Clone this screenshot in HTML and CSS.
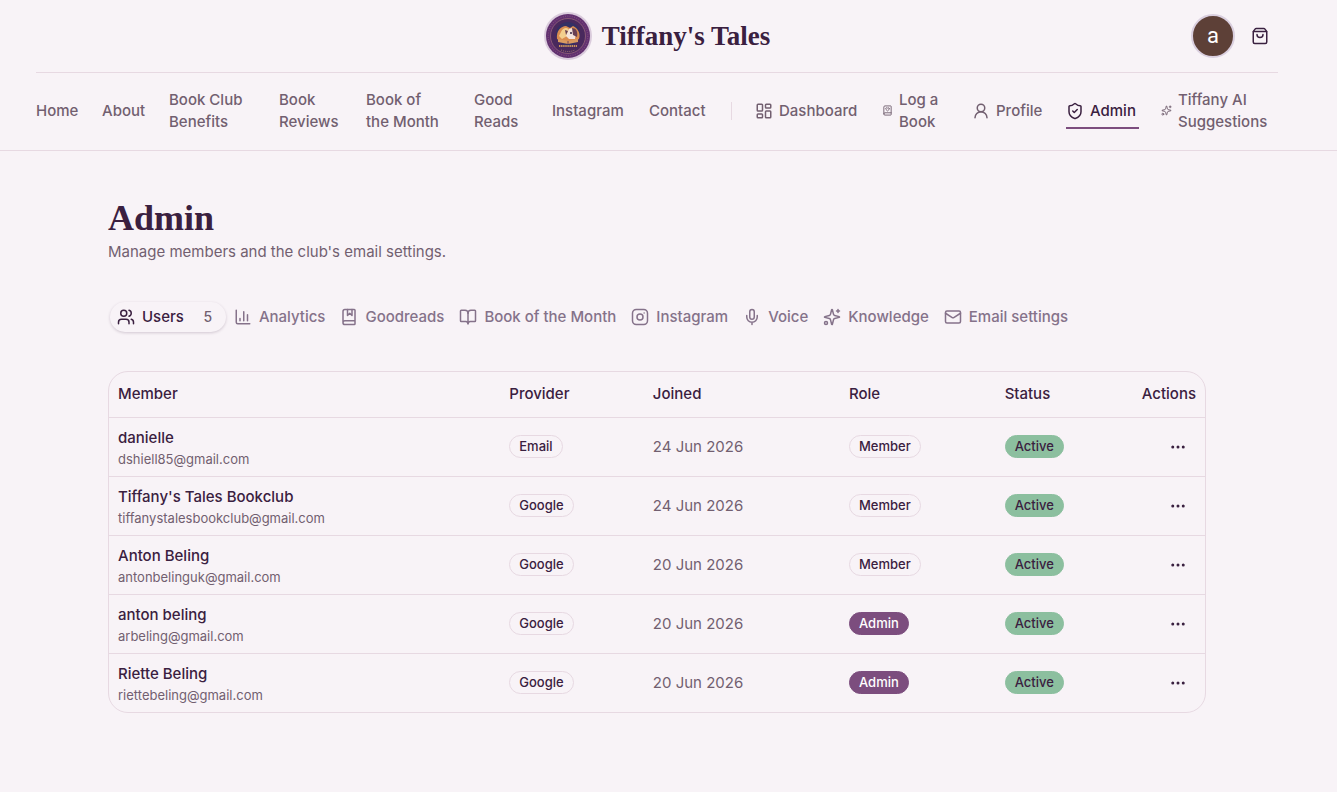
FILE: index.html
```html
<!DOCTYPE html>
<html lang="en">
<head>
  <meta charset="UTF-8">
  <meta name="viewport" content="width=device-width, initial-scale=1">
  <title>Admin - Tiffany's Tales</title>
  <link rel="stylesheet" href="styles.css">
</head>
<body>
  <!-- Shared icons -->
  <svg class="sprite" aria-hidden="true">
    <symbol id="dashboard" viewBox="0 0 24 24"><rect x="3" y="3" width="7" height="9" rx="1"/><rect x="14" y="3" width="7" height="5" rx="1"/><rect x="14" y="12" width="7" height="9" rx="1"/><rect x="3" y="16" width="7" height="5" rx="1"/></symbol>
    <symbol id="book-heart" viewBox="0 0 24 24"><path d="M16 8.2A2.22 2.22 0 0 0 13.8 6c-.8 0-1.4.3-1.8.9-.4-.6-1-.9-1.8-.9A2.22 2.22 0 0 0 8 8.2c0 .6.3 1.2.7 1.6A226.652 226.652 0 0 0 12 13a404 404 0 0 0 3.3-3.1 2.413 2.413 0 0 0 .7-1.7"/><path d="M4 19.5v-15A2.5 2.5 0 0 1 6.5 2H19a1 1 0 0 1 1 1v18a1 1 0 0 1-1 1H6.5a1 1 0 0 1 0-5H20"/></symbol>
    <symbol id="user" viewBox="0 0 24 24"><circle cx="12" cy="8" r="5"/><path d="M20 21a8 8 0 0 0-16 0"/></symbol>
    <symbol id="shield" viewBox="0 0 24 24"><path d="M20 13c0 5-3.5 7.5-7.66 8.95a1 1 0 0 1-.67-.01C7.5 20.5 4 18 4 13V6a1 1 0 0 1 1-1c2 0 4.5-1.2 6.24-2.72a1.17 1.17 0 0 1 1.52 0C14.51 3.81 17 5 19 5a1 1 0 0 1 1 1z"/><path d="m9 12 2 2 4-4"/></symbol>
    <symbol id="sparkles" viewBox="0 0 24 24"><path d="M9.937 15.5A2 2 0 0 0 8.5 14.063l-6.135-1.582a.5.5 0 0 1 0-.962L8.5 9.936A2 2 0 0 0 9.937 8.5l1.582-6.135a.5.5 0 0 1 .963 0L14.063 8.5A2 2 0 0 0 15.5 9.937l6.135 1.581a.5.5 0 0 1 0 .964L15.5 14.063a2 2 0 0 0-1.437 1.437l-1.582 6.135a.5.5 0 0 1-.963 0z"/><path d="M20 2v4M22 4h-4"/><circle cx="4" cy="20" r="2"/></symbol>
    <symbol id="users" viewBox="0 0 24 24"><path d="M16 21v-2a4 4 0 0 0-4-4H6a4 4 0 0 0-4 4v2"/><circle cx="9" cy="7" r="4"/><path d="M22 21v-2a4 4 0 0 0-3-3.87M16 3.128a4 4 0 0 1 0 7.744"/></symbol>
    <symbol id="chart" viewBox="0 0 24 24"><path d="M3 3v16a2 2 0 0 0 2 2h16M18 17V9M13 17V5M8 17v-3"/></symbol>
    <symbol id="book-marked" viewBox="0 0 24 24"><path d="M10 2v8l3-3 3 3V2"/><path d="M4 19.5v-15A2.5 2.5 0 0 1 6.5 2H19a1 1 0 0 1 1 1v18a1 1 0 0 1-1 1H6.5a1 1 0 0 1 0-5H20"/></symbol>
    <symbol id="book-open" viewBox="0 0 24 24"><path d="M12 7v14"/><path d="M3 18a1 1 0 0 1-1-1V4a1 1 0 0 1 1-1h5a4 4 0 0 1 4 4 4 4 0 0 1 4-4h5a1 1 0 0 1 1 1v13a1 1 0 0 1-1 1h-6a3 3 0 0 0-3 3 3 3 0 0 0-3-3z"/></symbol>
    <symbol id="instagram" viewBox="0 0 24 24"><rect x="2" y="2" width="20" height="20" rx="5"/><circle cx="12" cy="12" r="4"/><path d="M17.5 6.5h.01"/></symbol>
    <symbol id="mic" viewBox="0 0 24 24"><path d="M12 19v3M19 10v2a7 7 0 0 1-14 0v-2"/><rect x="9" y="2" width="6" height="13" rx="3"/></symbol>
    <symbol id="mail" viewBox="0 0 24 24"><path d="m22 7-8.991 5.727a2 2 0 0 1-2.009 0L2 7"/><rect x="2" y="4" width="20" height="16" rx="2"/></symbol>
    <symbol id="bag" viewBox="0 0 24 24"><path d="M16 10a4 4 0 0 1-8 0M3.103 6.034h17.794"/><path d="M3.4 5.467a2 2 0 0 0-.4 1.2V20a2 2 0 0 0 2 2h14a2 2 0 0 0 2-2V6.667a2 2 0 0 0-.4-1.2l-2-2.667A2 2 0 0 0 17 2H7a2 2 0 0 0-1.6.8z"/></symbol>
    <symbol id="dots" viewBox="0 0 24 24"><circle cx="5" cy="12" r="1"/><circle cx="12" cy="12" r="1"/><circle cx="19" cy="12" r="1"/></symbol>
  </svg>

  <header class="site-header">
    <div class="topbar">
      <a class="brand" href="#">
        <svg class="logo" viewBox="0 0 48 48" aria-hidden="true">
          <circle cx="24" cy="24" r="24" fill="#dacbdc"/>
          <circle cx="24" cy="24" r="22" fill="#61306f"/>
          <circle cx="24" cy="24" r="17.5" fill="#49295d" stroke="#96657a" stroke-width=".8"/>
          <circle cx="24" cy="24" r="19.8" fill="none" stroke="#7d4b7c" stroke-width="1.2" stroke-dasharray="1 1.3"/>
          <circle cx="24" cy="22" r="12" fill="#343064"/>
          <path d="M13 27c-1-8 4-13 9-13l4 2 3-2c5 2 8 8 6 13l-5 3H18z" fill="#d98c50"/>
          <path d="M17 20c2-5 8-5 8-1l-2 5-5 3-3-3z" fill="#f3cf8e"/>
          <path d="M25 17c3-2 7 0 7 4l-1 6h-6l-3-3z" fill="#f4e4dc"/>
          <path d="M28 16c5 0 6 5 5 9l-4-2zM21 18l3 1-2 4z" fill="#694052"/>
          <circle cx="27" cy="21" r="1" fill="#352540"/>
          <path d="m14 27 10 2 10-2v3l-10 2-10-2z" fill="#d99b61"/>
          <path d="M24 29v3" stroke="#70405c"/>
          <path d="M15 34h18" stroke="#c8945c" stroke-width="2" stroke-dasharray="1.4 .7"/>
          <path d="M17 38q7 3 14 0" fill="none" stroke="#a67571" stroke-dasharray="1 1"/>
        </svg>
        <span>Tiffany's Tales</span>
      </a>
      <div class="account">
        <button class="avatar" aria-label="Account">a</button>
        <button class="icon-btn" aria-label="Shopping bag"><svg class="icon"><use href="#bag"/></svg></button>
      </div>
    </div>
    <nav class="main-nav">
      <a href="#">Home</a>
      <a href="#">About</a>
      <a href="#">Book Club<br>Benefits</a>
      <a href="#">Book<br>Reviews</a>
      <a href="#">Book of<br>the Month</a>
      <a href="#">Good<br>Reads</a>
      <a href="#">Instagram</a>
      <a href="#">Contact</a>
      <span class="divider"></span>
      <a href="#"><svg class="icon"><use href="#dashboard"/></svg>Dashboard</a>
      <a href="#"><svg class="icon small"><use href="#book-heart"/></svg><span>Log a<br>Book</span></a>
      <a href="#"><svg class="icon"><use href="#user"/></svg>Profile</a>
      <a class="current" href="#"><svg class="icon"><use href="#shield"/></svg>Admin</a>
      <a href="#"><svg class="icon small"><use href="#sparkles"/></svg><span>Tiffany AI<br>Suggestions</span></a>
    </nav>
  </header>

  <main>
    <h1>Admin</h1>
    <p class="intro">Manage members and the club's email settings.</p>

    <div class="tabs" role="tablist">
      <button class="tab active" role="tab" aria-selected="true"><svg class="icon"><use href="#users"/></svg>Users <span class="count">5</span></button>
      <button class="tab" role="tab"><svg class="icon"><use href="#chart"/></svg>Analytics</button>
      <button class="tab" role="tab"><svg class="icon"><use href="#book-marked"/></svg>Goodreads</button>
      <button class="tab" role="tab"><svg class="icon"><use href="#book-open"/></svg>Book of the Month</button>
      <button class="tab" role="tab"><svg class="icon"><use href="#instagram"/></svg>Instagram</button>
      <button class="tab" role="tab"><svg class="icon"><use href="#mic"/></svg>Voice</button>
      <button class="tab" role="tab"><svg class="icon"><use href="#sparkles"/></svg>Knowledge</button>
      <button class="tab" role="tab"><svg class="icon"><use href="#mail"/></svg>Email settings</button>
    </div>

    <div class="table-card">
      <table>
        <thead>
          <tr>
            <th class="col-member">Member</th>
            <th class="col-provider">Provider</th>
            <th class="col-joined">Joined</th>
            <th class="col-role">Role</th>
            <th>Status</th>
            <th class="actions">Actions</th>
          </tr>
        </thead>
        <tbody>
          <tr>
            <td><div class="name">danielle</div><div class="email">dshiell85@gmail.com</div></td>
            <td><span class="badge">Email</span></td>
            <td class="date">24 Jun 2026</td>
            <td><span class="badge">Member</span></td>
            <td><span class="badge success">Active</span></td>
            <td class="actions"><button class="icon-btn" aria-label="Actions for danielle"><svg class="icon"><use href="#dots"/></svg></button></td>
          </tr>
          <tr>
            <td><div class="name">Tiffany's Tales Bookclub</div><div class="email">tiffanystalesbookclub@gmail.com</div></td>
            <td><span class="badge">Google</span></td>
            <td class="date">24 Jun 2026</td>
            <td><span class="badge">Member</span></td>
            <td><span class="badge success">Active</span></td>
            <td class="actions"><button class="icon-btn" aria-label="Actions for Tiffany's Tales Bookclub"><svg class="icon"><use href="#dots"/></svg></button></td>
          </tr>
          <tr>
            <td><div class="name">Anton Beling</div><div class="email">antonbelinguk@gmail.com</div></td>
            <td><span class="badge">Google</span></td>
            <td class="date">20 Jun 2026</td>
            <td><span class="badge">Member</span></td>
            <td><span class="badge success">Active</span></td>
            <td class="actions"><button class="icon-btn" aria-label="Actions for Anton Beling"><svg class="icon"><use href="#dots"/></svg></button></td>
          </tr>
          <tr>
            <td><div class="name">anton beling</div><div class="email">arbeling@gmail.com</div></td>
            <td><span class="badge">Google</span></td>
            <td class="date">20 Jun 2026</td>
            <td><span class="badge primary">Admin</span></td>
            <td><span class="badge success">Active</span></td>
            <td class="actions"><button class="icon-btn" aria-label="Actions for anton beling"><svg class="icon"><use href="#dots"/></svg></button></td>
          </tr>
          <tr>
            <td><div class="name">Riette Beling</div><div class="email">riettebeling@gmail.com</div></td>
            <td><span class="badge">Google</span></td>
            <td class="date">20 Jun 2026</td>
            <td><span class="badge primary">Admin</span></td>
            <td><span class="badge success">Active</span></td>
            <td class="actions"><button class="icon-btn" aria-label="Actions for Riette Beling"><svg class="icon"><use href="#dots"/></svg></button></td>
          </tr>
        </tbody>
      </table>
    </div>
  </main>
</body>
</html>
```

FILE: styles.css
```css
:root {
  --bg: #f8f3f7;
  --text: #3a2040;
  --muted: #725f70;
  --border: #e7d9e2;
  --primary: #7c4d7e;
  --success: #8cbf9f;
}
* {
  box-sizing: border-box;
}
body {
  margin: 0;
  background: var(--bg);
  color: var(--text);
  font: 15px/22px Inter, "Liberation Sans", sans-serif;
}
a {
  color: inherit;
  text-decoration: none;
}
button {
  font: inherit;
  color: inherit;
  background: none;
  border: 0;
  padding: 0;
  cursor: pointer;
}
.sprite {
  position: absolute;
  width: 0;
  height: 0;
}
.icon {
  width: 18px;
  height: 18px;
  flex: none;
  fill: none;
  stroke: currentColor;
  stroke-width: 2;
  stroke-linecap: round;
  stroke-linejoin: round;
}
.icon.small {
  width: 11px;
  height: 11px;
}

/* Header */
.site-header {
  padding: 0 59px 2px 36px;
  border-bottom: 1px solid var(--border);
}
.topbar {
  display: grid;
  grid-template-columns: 1fr auto 1fr;
  align-items: center;
  height: 73px;
  border-bottom: 1px solid var(--border);
}
.brand {
  grid-column: 2;
  display: flex;
  align-items: center;
  gap: 10px;
  font: bold 27px/36px "Liberation Serif", serif;
}
.logo {
  width: 48px;
  height: 48px;
}
.account {
  display: flex;
  align-items: center;
  justify-content: flex-end;
  gap: 7px;
}
.avatar {
  width: 44px;
  height: 44px;
  border: 2px solid #dacfdf;
  border-radius: 50%;
  background: #5d4037;
  color: #fff;
  font: 22px/36px Roboto, sans-serif;
}
.icon-btn {
  display: inline-flex;
  align-items: center;
  justify-content: center;
  width: 36px;
  height: 36px;
}
.main-nav {
  display: grid;
  grid-template-columns: 44fr 45fr 88fr 65fr 86fr 56fr 75fr 60fr 2fr 105fr 68fr 72fr 73fr 117fr;
  column-gap: 22px;
  align-items: center;
  height: 75px;
  color: var(--muted);
  font-weight: 500;
  white-space: nowrap;
}
.main-nav a {
  display: flex;
  align-items: center;
  gap: 6px;
}
.main-nav .current {
  padding: 8px 0 5px;
  border-bottom: 2px solid var(--primary);
  color: var(--text);
}
.divider {
  height: 18px;
  border-left: 1px solid var(--border);
}

/* Page */
main {
  padding: 47px 131px 40px 108px;
}
h1 {
  margin: 0;
  font: bold 36px/40px "Liberation Serif", serif;
}
.intro {
  margin: 3px 0 37px;
  color: var(--muted);
}
.tabs {
  display: flex;
  gap: 1px;
  padding: 2px;
}
.tab {
  display: flex;
  align-items: center;
  gap: 7px;
  height: 30px;
  padding: 0 7px;
  border-radius: 15px;
  color: #85728a;
  font-weight: 500;
  white-space: nowrap;
}
.tab.active {
  color: var(--text);
  box-shadow: 0 1px 3px rgba(58, 32, 64, 0.2);
}
.count {
  width: 28px;
  padding-left: 6px;
  color: var(--muted);
  font-size: 14px;
}

/* Members table */
.table-card {
  margin-top: 37px;
  border: 1px solid var(--border);
  border-radius: 20px;
  overflow: hidden;
}
table {
  width: 100%;
  border-collapse: collapse;
  table-layout: fixed;
}
th, td {
  padding: 0 9px;
  text-align: left;
}
th {
  height: 45px;
  font-weight: 500;
}
td {
  height: 59px;
  border-top: 1px solid var(--border);
}
.col-member {
  width: 35.7%;
}
.col-provider {
  width: 13.1%;
}
.col-joined {
  width: 17.9%;
}
.col-role {
  width: 14.2%;
}
.actions {
  text-align: right;
}
.actions .icon-btn {
  vertical-align: middle;
}
.name {
  padding-top: 2px;
  font-weight: 500;
}
.email {
  color: var(--muted);
  font-size: 13px;
  line-height: 20px;
}
.date {
  color: var(--muted);
}
.badge {
  display: inline-block;
  padding: 0 9px;
  border: 1px solid var(--border);
  border-radius: 12px;
  font-size: 13px;
  line-height: 21px;
  font-weight: 500;
  vertical-align: middle;
}
.badge.primary {
  background: var(--primary);
  border-color: var(--primary);
  color: #fff;
}
.badge.success {
  background: var(--success);
  border-color: var(--success);
}
```
